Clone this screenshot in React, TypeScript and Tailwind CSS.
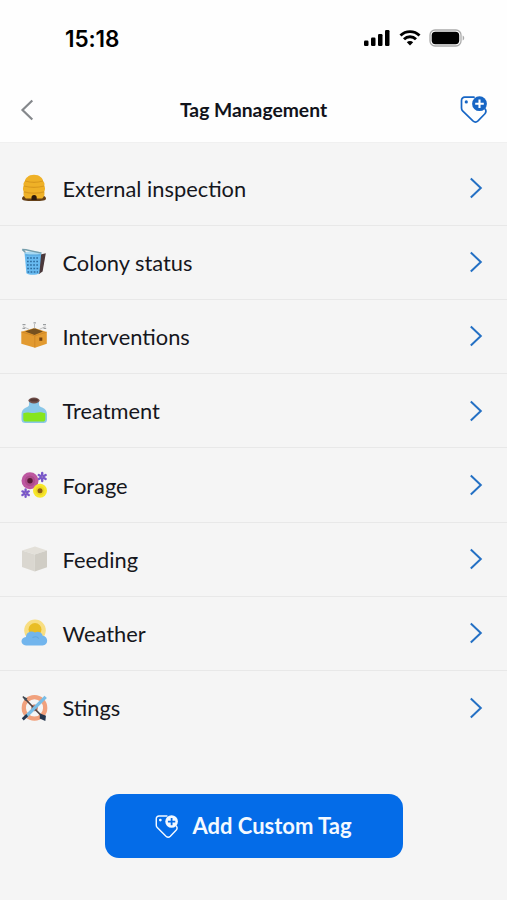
import type { ReactNode } from "react";

function TagPlus({ className, cut }: { className: string; cut: string }) {
  return (
    <svg className={className} viewBox="0 0 27 27" fill="none">
      <path
        d="M14 1.2H4.7A3.2 3.2 0 0 0 1.500 4.4v7.600c0 1.200.3 2 1.100 2.800l10.300 10.100c1.700 1.500 3.500 1.500 5.100 0l6.700-6.900c1.500-1.700 1.600-3.400.4-5"
        stroke="currentColor"
        strokeWidth="1.700"
        strokeLinecap="round"
      />
      <circle cx="6.300" cy="5.900" r="1.600" fill="currentColor" />
      <circle cx="19.500" cy="7.700" r="7.400" fill="currentColor" />
      <path d="M19.500 3.400v8.600M15.200 7.700h8.600" stroke={cut} strokeWidth="2.100" />
    </svg>
  );
}

function Icon({ children }: { children: ReactNode }) {
  return (
    <svg className="size-7 shrink-0" viewBox="0 0 28 28" fill="none">
      {children}
    </svg>
  );
}

function Hive() {
  return (
    <Icon>
      <path d="M2 24.500C2 22 5 21 14 21s12 1 12 3.500c0 2-3 2.600-12 2.600S2 26.500 2 24.500Z" fill="#654018" />
      <path d="M7.500 3C10 0 18 0 20.500 3c1.500 1 2.300 2.200 2.600 4 1.400 1.500 1.700 3 1.200 4.800 1 2 1 4-.1 6 .8 2.700.1 5-2 6.700H5.800c-2.100-1.700-2.800-4-2-6.700-1.100-2-1.100-4-.1-6C3.200 10 3.500 8.500 4.900 7c.3-1.800 1.100-3 2.600-4Z" fill="#efb127" />
      <path d="M5 7c5 1.500 13 1.500 18 0M3.800 12c6 1.700 14.500 1.700 20.400 0M3.800 17.800c6 1.600 14.500 1.600 20.400 0" stroke="#d9991d" strokeWidth="1.200" />
      <path d="M11.500 26v-2.300a2.600 2.600 0 0 1 5.200 0V26Z" fill="#2b190d" />
    </Icon>
  );
}

function Bucket() {
  return (
    <Icon>
      <path d="m18.500 7 7.300-1.800-3.200 18.300-3.900 2.700Z" fill="#4b393b" />
      <path d="M4.500 4.800h16.700l-1.800 20.400c-3.400 2-10 2-13 0Z" fill="#68baf0" />
      <ellipse cx="13.200" cy="5" rx="8.300" ry="1.700" fill="#a7d9f3" />
      <path d="M2.200 1.500 5.500 4.500M2.200 1.500 6 1.800l15.500 3.300" stroke="#759eac" strokeWidth="1.400" />
      <path d="M7 10h12M7 13.500h12M7 17h11.500M7.200 20.500h11.300M7.500 24h10.500" stroke="#2c6c9f" strokeWidth="1.600" strokeDasharray="1.700 1.400" />
      <path d="M5.500 7h14.800" stroke="#4998cf" strokeWidth=".7" />
    </Icon>
  );
}

function OpenBox() {
  return (
    <Icon>
      <path d="m1.300 9.700 13.200-3.600 12.300 3.800v11.800l-11.800 4-13.700-4Z" fill="#e29a30" />
      <path d="m5 9.500 9.500-3.300 8.500 3.300-8.500 3.600Z" fill="#76501f" />
      <path d="m1.500 9.900 13.300 4 11.700-3.800M14.800 13.900v11.600" stroke="#cd8425" strokeWidth=".8" />
      <path d="M19.300 15.500h3v3.300h-3Z" fill="#74410f" />
      <path d="m3 4.500 6 2.800M25.500 4.500l-6 2.800M14.500 2v5" stroke="#9a9b9b" strokeWidth=".6" />
      <path d="M2.500 2.700h3M23 2.700h3M13.500.9h2.400M2.500 6.300h2.700M23.500 6.300h2.700" stroke="#85898c" strokeWidth="1" />
    </Icon>
  );
}

function Bottle() {
  return (
    <Icon>
      <path d="M9 3.500h10v4.200c0 1.200 1 1.900 3.300 2.800 3.300 1.300 4.700 3.700 4.700 7v5c0 2.500-1.200 3.500-3.500 3.500h-18c-2.500 0-4-1-4-3.500v-5c0-3.300 1.400-5.700 4.500-7C8 9.800 9 9 9 7.700Z" fill="#89c7e8" />
      <path d="M3.300 16.300c5-2.100 7 .8 12.500-.6 3.800-1 6-.5 9.500.6v5.900c0 1.800-.9 2.300-2.600 2.300H6c-1.800 0-2.700-.7-2.700-2.300Z" fill="#86e51d" />
      <ellipse cx="14" cy="3.500" rx="5.600" ry="2.900" fill="#74534e" />
      <ellipse cx="14" cy="2.900" rx="4" ry="1.500" fill="#563833" />
    </Icon>
  );
}

function Flowers() {
  const petals = [0, 60, 120];
  return (
    <Icon>
      {petals.map((a) => (
        <path key={a} d="M22.200 2v8" transform={`rotate(${a} 22.200 6)`} stroke="#7957c9" strokeWidth="2.400" strokeLinecap="round" />
      ))}
      {petals.map((a) => (
        <path key={a} d="M5.600 18.500v7.400" transform={`rotate(${a} 5.600 22.200)`} stroke="#7957c9" strokeWidth="2.300" strokeLinecap="round" />
      ))}
      <circle cx="10" cy="9.700" r="8.500" fill="#bd57a0" />
      <circle cx="10" cy="9.700" r="5.200" fill="#ad4c8b" />
      <circle cx="10" cy="9.700" r="2.700" fill="#591b39" />
      <circle cx="20" cy="19.700" r="7" fill="#f7e72c" />
      <circle cx="20" cy="19.700" r="4.500" fill="#edd624" />
      <circle cx="20" cy="19.700" r="2.500" fill="#8d5d15" />
      <circle cx="22.200" cy="6" r=".7" fill="#a991b0" />
      <circle cx="5.600" cy="22.200" r=".7" fill="#a991b0" />
    </Icon>
  );
}

function SugarCube() {
  return (
    <Icon>
      <path d="m15 1.400 12 4.200-12.200 4L2 5.500Z" fill="#e3e0d9" />
      <path d="m2 5.500 12.800 4.100V26.500L2 22Z" fill="#dad7d0" />
      <path d="M14.800 9.600 27 5.600v16.600l-12.200 4.300Z" fill="#d0cdc5" />
    </Icon>
  );
}

function Weather() {
  return (
    <Icon>
      <circle cx="15" cy="11.300" r="10.800" fill="#f8de82" />
      <circle cx="15" cy="10.500" r="6.500" fill="#e9bd25" />
      <path d="M6 26.400c-6 0-6-8 0-8.300 0-4.700 5-7.100 9-4.600 3-1.600 7-.1 7.700 3.300 6 .7 6 9.400-.2 9.600Z" fill="#72b5ed" />
      <path d="M12.500 18.500c3-1.300 5-.7 6.300 1" stroke="#61a5dd" strokeWidth="1.100" />
    </Icon>
  );
}

function Stings() {
  return (
    <Icon>
      <circle cx="14.500" cy="13.900" r="10.700" stroke="#f1a17d" strokeWidth="4.300" />
      <circle cx="14.500" cy="13.900" r="3.300" fill="#c57962" />
      <path d="m3 2.700 20 20.700" stroke="#514342" strokeWidth="1.600" />
      <path d="m2.500 2 5 2.500L5.200 7Z" fill="#3f4c58" />
      <path d="m20 19.400 6 2.300-.7 5.200-5.600-2.400Z" fill="#25364e" />
      <path d="M25.700 2.800 5.500 23" stroke="#79bde6" strokeWidth="3.300" />
      <path d="M6.300 20 1.800 24.200l1.900 2.200L8 22.500Z" fill="#25364e" />
    </Icon>
  );
}

const rows = [
  { label: "External inspection", icon: <Hive /> },
  { label: "Colony status", icon: <Bucket /> },
  { label: "Interventions", icon: <OpenBox /> },
  { label: "Treatment", icon: <Bottle /> },
  { label: "Forage", icon: <Flowers /> },
  { label: "Feeding", icon: <SugarCube /> },
  { label: "Weather", icon: <Weather /> },
  { label: "Stings", icon: <Stings /> },
];

export default function App() {
  return (
    <div className="flex h-[900px] w-[507px] flex-col overflow-hidden bg-[#f5f5f5] font-['Lato',sans-serif] text-[#16171d]">
      <header className="h-[142px] shrink-0 bg-[#fefefe]">
        <div className="flex h-[76px] items-center justify-between pr-[42px] pl-[65px]">
          <span className="pt-px font-['Inter',sans-serif] text-[22.500px] font-semibold tracking-[-0.1px] text-black">15:18</span>
          <div className="flex items-center text-black">
            <svg className="h-4 w-[26px]" viewBox="0 0 26 16" fill="currentColor">
              <rect x="0" y="10.500" width="4.500" height="5.500" rx="1.200" />
              <rect x="7" y="7.500" width="4.500" height="8.500" rx="1.200" />
              <rect x="14" y="4" width="4.500" height="12" rx="1.200" />
              <rect x="21" y="0" width="4.500" height="16" rx="1.200" />
            </svg>
            <svg className="ml-[9px] h-4 w-[22px]" viewBox="0 0 22 16" fill="none">
              <path d="M1.500 5.500a13.500 13.500 0 0 1 19 0M5 9.200a8.600 8.600 0 0 1 12 0" stroke="currentColor" strokeWidth="2.900" />
              <path d="M7.800 12.200a4.600 4.600 0 0 1 6.400 0L11 15.500Z" fill="currentColor" />
            </svg>
            <svg className="ml-2 h-[18px] w-9" viewBox="0 0 36 18" fill="none">
              <rect x="1" y="1" width="31" height="16" rx="5" stroke="#aaa" strokeWidth="1.300" />
              <rect x="2.700" y="2.700" width="27.500" height="12.600" rx="3.700" fill="currentColor" />
              <path d="M33.700 6.500c2 .8 2 4.200 0 5Z" fill="#aaa" />
            </svg>
          </div>
        </div>
        <div className="flex h-[66px] items-center justify-between pr-5 pl-5">
          <svg className="mb-[-1px] h-[22px] w-[27px]" viewBox="0 0 27 22" fill="none">
            <path d="m12.300 1.500-9.800 9.500 9.800 9.500" stroke="#85888c" strokeWidth="2.200" />
          </svg>
          <h1 className="pt-0.5 text-[19.300px] font-bold text-[#11131a]">Tag Management</h1>
          <TagPlus className="size-[27px] text-[#1766c5]" cut="#fff" />
        </div>
      </header>
      <main className="flex flex-col items-center border-t border-[#f0f0f0] pt-[8.250px]">
        <ul className="w-full">
          {rows.map((row) => (
            <li key={row.label} className="flex h-[74.250px] items-center border-b border-[#e8e8e8] pr-6 pl-5 last:border-transparent">
              {row.icon}
              <span className="ml-[14.500px] flex-1 pt-[2.500px] text-[21.850px]">{row.label}</span>
              <svg className="h-[22px] w-[14px]" viewBox="0 0 14 22" fill="none">
                <path d="m1.800 1.500 10 9.500-10 9.500" stroke="#2470c4" strokeWidth="2" />
              </svg>
            </li>
          ))}
        </ul>
        <button className="mt-[48.750px] flex h-16 w-[298px] items-center justify-center rounded-[14px] bg-[#046ce8] text-[22px] font-bold text-[#f4f9ff]">
          <TagPlus className="mr-[14px] size-[23px]" cut="#046ce8" />
          <span className="pb-0.5">Add Custom Tag</span>
        </button>
      </main>
    </div>
  );
}
